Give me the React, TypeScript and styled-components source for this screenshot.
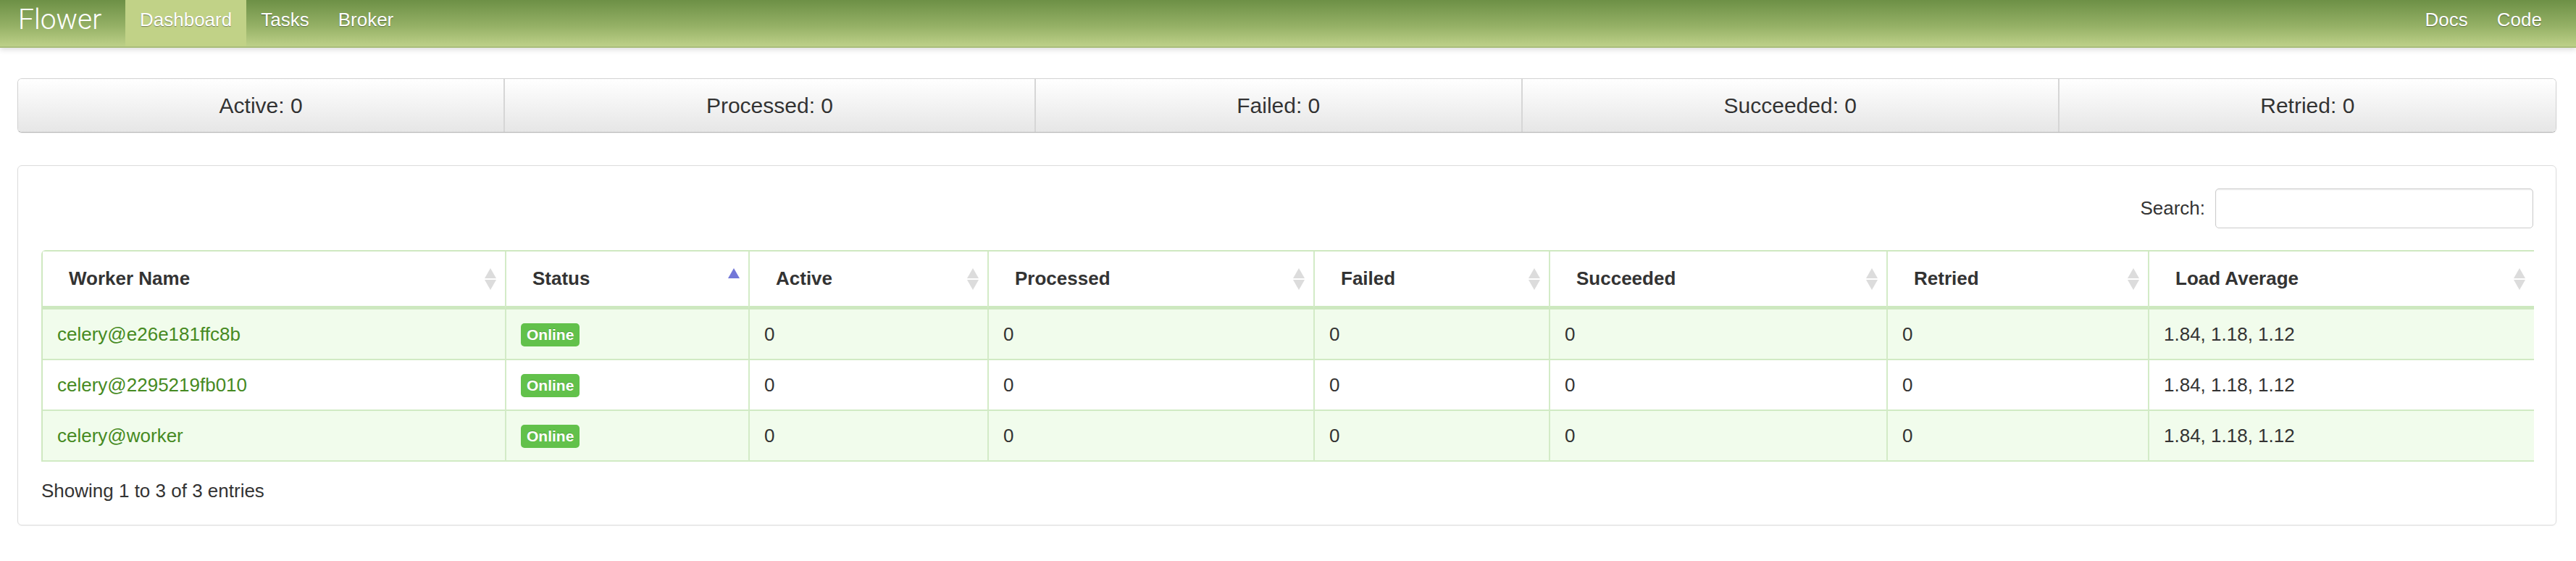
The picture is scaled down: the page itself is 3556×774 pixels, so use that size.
import React from "react";
import styled, { createGlobalStyle } from "styled-components";

const GlobalStyle = createGlobalStyle`
  html, body { margin: 0; padding: 0; background: #fff; }
  body {
    font-family: "Liberation Sans", Helvetica, Arial, sans-serif;
    font-size: 26px;
    color: #333;
  }
  * { box-sizing: border-box; }
`;

const NavBar = styled.header`
  height: 66px;
  display: flex;
  align-items: stretch;
  padding: 0 27px 0 25px;
  background: linear-gradient(to bottom, #6d9046 0%, #94b065 55%, #bdd088 100%);
  border-bottom: 2px solid #a9bd7b;
  box-shadow: 0 3px 7px rgba(0, 0, 0, 0.13);
`;

const Brand = styled.a`
  width: 148px;
  padding-top: 4px;
  font-family: Roboto, "Liberation Sans", sans-serif;
  font-weight: 300;
  font-size: 39px;
  line-height: 46px;
  color: #fff;
  text-decoration: none;
`;

const NavLink = styled.a<{ $active?: boolean }>`
  padding: 12px 20px 0;
  font-size: 26px;
  line-height: 30px;
  color: #fff;
  text-decoration: none;
  text-shadow: 0 1px 1px rgba(0, 0, 0, 0.4);
  background: ${(p) => (p.$active ? "#c1d287" : "transparent")};
`;

const Spacer = styled.div`
  flex: 1;
`;

const Container = styled.main`
  padding: 42px 27px 40px 24px;
`;

const StatsGroup = styled.div`
  display: flex;
  height: 75px;
  border: 1px solid #d2d2d2;
  border-bottom-color: #b5b5b5;
  border-radius: 6px;
  overflow: hidden;
  box-shadow: 0 1px 2px rgba(0, 0, 0, 0.06);
`;

const StatButton = styled.div`
  flex: 1 1 auto;
  display: flex;
  align-items: center;
  justify-content: center;
  padding: 0 20px;
  font-size: 30px;
  color: #333;
  text-shadow: 0 1px 1px rgba(255, 255, 255, 0.75);
  background: linear-gradient(to bottom, #ffffff 0%, #e6e6e6 100%);
  & + & {
    border-left: 2px solid #d6d6d6;
  }
`;

const Panel = styled.section`
  margin-top: 45px;
  border: 1px solid #dcdcdc;
  border-radius: 6px;
  padding: 31px 31px 32px 32px;
  box-shadow: 0 1px 2px rgba(0, 0, 0, 0.04);
`;

const SearchRow = styled.div`
  display: flex;
  justify-content: flex-end;
  align-items: center;
  gap: 14px;
`;

const SearchLabel = styled.label`
  font-size: 26px;
  color: #333;
`;

const SearchInput = styled.input`
  width: 439px;
  height: 55px;
  border: 1px solid #cccccc;
  border-radius: 5px;
  box-shadow: inset 0 1px 2px rgba(0, 0, 0, 0.08);
  font-size: 26px;
  padding: 0 10px;
  outline: none;
`;

const Table = styled.table`
  width: 100%;
  margin-top: 30px;
  table-layout: fixed;
  border-collapse: separate;
  border-spacing: 0;
  border-top: 2px solid #cfe8c1;
  border-left: 2px solid #cfe8c1;
  border-top-left-radius: 6px;
`;

const Col = styled.col<{ $w: number }>`
  width: ${(p) => p.$w}px;
`;

const Th = styled.th`
  height: 80px;
  padding: 0 12px 0 36px;
  text-align: left;
  font-weight: bold;
  font-size: 26px;
  color: #333;
  background: #fff;
  border-bottom: 5px solid #cde8bf;
  & + & {
    border-left: 2px solid #d3ebc7;
  }
`;

const ThInner = styled.div`
  display: flex;
  align-items: center;
  justify-content: space-between;
`;

const Tr = styled.tr<{ $odd: boolean }>`
  background: ${(p) => (p.$odd ? "#f1fcec" : "#ffffff")};
`;

const Td = styled.td`
  height: 70px;
  padding: 0 20px;
  font-size: 26px;
  color: #333;
  border-bottom: 2px solid #d1eac4;
  white-space: nowrap;
  & + & {
    border-left: 2px solid #d3ebc7;
  }
`;

const WorkerLink = styled.a`
  color: #468a22;
  text-decoration: none;
`;

const Badge = styled.span`
  display: inline-block;
  padding: 4px 8px;
  border-radius: 5px;
  background: #62c14b;
  color: #fff;
  font-weight: bold;
  font-size: 21px;
  line-height: 24px;
  text-shadow: 0 -1px 0 rgba(0, 0, 0, 0.2);
`;

const Footer = styled.div`
  margin-top: 25px;
  font-size: 26px;
  line-height: 30px;
  color: #333;
`;

const SortIcon: React.FC<{ active?: boolean }> = ({ active }) => (
  <svg width="16" height="30" viewBox="0 0 16 30" style={{ flex: "none" }}>
    {active ? (
      <polygon points="8,0 16,14 0,14" fill="#7277d8" />
    ) : (
      <>
        <polygon points="8,0 16,14 0,14" fill="#dcdcdc" />
        <polygon points="0,16 16,16 8,30" fill="#dcdcdc" />
      </>
    )}
  </svg>
);

const columns = [
  { label: "Worker Name", w: 638 },
  { label: "Status", w: 336, active: true },
  { label: "Active", w: 330 },
  { label: "Processed", w: 450 },
  { label: "Failed", w: 325 },
  { label: "Succeeded", w: 466 },
  { label: "Retried", w: 361 },
  { label: "Load Average", w: 533 },
];

const workers = ["celery@e26e181ffc8b", "celery@2295219fb010", "celery@worker"];

const stats = ["Active: 0", "Processed: 0", "Failed: 0", "Succeeded: 0", "Retried: 0"];

export default function App() {
  return (
    <>
      <GlobalStyle />
      <NavBar>
        <Brand href="#">Flower</Brand>
        <NavLink $active href="#">Dashboard</NavLink>
        <NavLink href="#">Tasks</NavLink>
        <NavLink href="#">Broker</NavLink>
        <Spacer />
        <NavLink href="#">Docs</NavLink>
        <NavLink href="#">Code</NavLink>
      </NavBar>
      <Container>
        <StatsGroup>
          {stats.map((s) => (
            <StatButton key={s}>{s}</StatButton>
          ))}
        </StatsGroup>
        <Panel>
          <SearchRow>
            <SearchLabel>Search:</SearchLabel>
            <SearchInput type="text" />
          </SearchRow>
          <Table>
            <colgroup>
              {columns.map((c) => (
                <Col key={c.label} $w={c.w} />
              ))}
            </colgroup>
            <thead>
              <tr>
                {columns.map((c) => (
                  <Th key={c.label}>
                    <ThInner>
                      <span>{c.label}</span>
                      <SortIcon active={c.active} />
                    </ThInner>
                  </Th>
                ))}
              </tr>
            </thead>
            <tbody>
              {workers.map((w, i) => (
                <Tr key={w} $odd={i % 2 === 0}>
                  <Td>
                    <WorkerLink href="#">{w}</WorkerLink>
                  </Td>
                  <Td>
                    <Badge>Online</Badge>
                  </Td>
                  <Td>0</Td>
                  <Td>0</Td>
                  <Td>0</Td>
                  <Td>0</Td>
                  <Td>0</Td>
                  <Td>1.84, 1.18, 1.12</Td>
                </Tr>
              ))}
            </tbody>
          </Table>
          <Footer>Showing 1 to 3 of 3 entries</Footer>
        </Panel>
      </Container>
    </>
  );
}
